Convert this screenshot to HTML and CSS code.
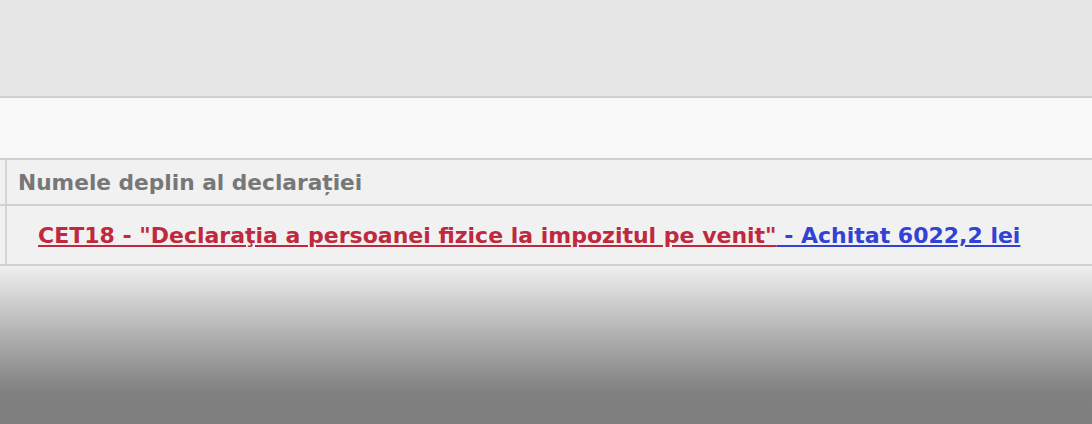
FILE: index.html
```html
<!DOCTYPE html>
<html lang="ro">
<head>
<meta charset="utf-8">
<link rel="stylesheet" href="styles.css">
</head>
<body>
<div class="top"></div>
<div class="bar"></div>
<div class="row head">
  <div class="stub"></div>
  <div class="cell">Numele deplin al declarației</div>
</div>
<div class="row data">
  <div class="stub"></div>
  <div class="cell"><span class="line"><a class="red" href="#">CET18 - "Declaraţia a persoanei fizice la impozitul pe venit"</a><a class="blue" href="#"> - Achitat 6022,2 lei</a></span></div>
</div>
<div class="fade"></div>
</body>
</html>
```
FILE: styles.css
```css
html, body { margin: 0; padding: 0; }
body {
  width: 1092px;
  height: 424px;
  overflow: hidden;
  font-family: "DejaVu Sans", Verdana, sans-serif;
  background: #808080;
}
.top { height: 96px; background: #e6e6e6; }
.bar {
  height: 60px;
  background: #f9f9f9;
  border-top: 2px solid #d0d0d0;
  border-bottom: 2px solid #d0d0d0;
}
.row {
  display: flex;
  background: #f1f1f1;
  border-bottom: 2px solid #d0d0d0;
}
.stub { width: 5px; border-right: 2px solid #d4d4d4; }
.cell { flex: 1; display: flex; align-items: center; }
.head { height: 44px; }
.head .cell {
  padding-left: 11px;
  font-weight: bold;
  font-size: 21.7px;
  color: #777777;
}
.data { height: 58px; }
.data .cell {
  padding-left: 31px;
  font-weight: bold;
  font-size: 22px;
}
.line { white-space: pre; }
.red { color: #c0293d; text-decoration: underline; }
.blue { color: #3142d4; text-decoration: underline; }
.fade {
  height: 158px;
  background: linear-gradient(to bottom, #efefef 0%, #c4c4c4 30%, #9a9a9a 60%, #808080 80%, #7e7e7e 100%);
}
```
